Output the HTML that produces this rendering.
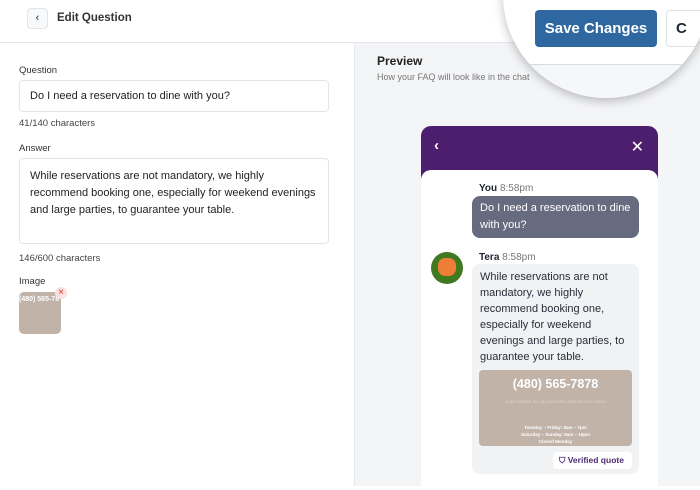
<!DOCTYPE html>
<html><head><style>
*{box-sizing:border-box;margin:0;padding:0}
body{width:700px;height:486px;overflow:hidden;font-family:"Liberation Sans",sans-serif;background:#fff;position:relative;color:#1f2430}
.hdr{position:absolute;left:0;top:0;width:700px;height:43px;border-bottom:1px solid #e6e7ea;background:#fff}
.back{position:absolute;left:27px;top:8px;width:21px;height:21px;border:1px solid #e3e4e8;border-radius:4px;background:#f8f9fa;font-size:11px;text-align:center;line-height:19px;color:#333}
.ttl{position:absolute;left:57px;top:12px;font-size:11.5px;color:#333;font-weight:600}
.left{position:absolute;left:0;top:43px;width:354px;height:443px;background:#fff}
.right{position:absolute;left:354px;top:43px;width:346px;height:443px;background:#f4f5f7;border-left:1px solid #e6e7ea}
.lbl{position:absolute;left:19px;font-size:9.5px;color:#333}
.box{position:absolute;left:19px;width:310px;border:1px solid #e3e4e8;border-radius:4px;background:#fff;font-size:11px;color:#222;padding:9px 10px;line-height:17px}
.cnt{position:absolute;left:19px;font-size:9.5px;color:#444}
.chat{position:absolute;left:421px;top:126px;width:237px;height:360px;background:#4d1d6e;border-radius:10px 10px 0 0}
.cbody{position:absolute;left:0;top:44px;width:237px;height:320px;background:#fff;border-radius:10px 10px 0 0}
</style></head><body>
<div class="hdr"><div class="back">‹</div><div class="ttl">Edit Question</div></div>
<div class="left">
<div class="lbl" style="top:22px">Question</div>
<div class="box" style="top:37px;height:32px;padding:7px 10px">Do I need a reservation to dine with you?</div>
<div class="cnt" style="top:75px">41/140 characters</div>
<div class="lbl" style="top:100px">Answer</div>
<div class="box" style="top:115px;height:86px">While reservations are not mandatory, we highly recommend booking one, especially for weekend evenings and large parties, to guarantee your table.</div>
<div class="cnt" style="top:210px">146/600 characters</div>
<div class="lbl" style="top:233px">Image</div>
<div style="position:absolute;left:19px;top:249px;width:42px;height:42px;background:#c1b3a8;border-radius:5px;overflow:hidden;color:#fff;font-size:7px;font-weight:bold;padding-top:4px;white-space:nowrap">(480) 565-78</div>
<div style="position:absolute;left:55px;top:244px;width:12px;height:12px;border-radius:50%;background:#fbe0e0;color:#d33;font-size:10px;line-height:12px;text-align:center">×</div>
</div>
<div class="right">
<div style="position:absolute;left:22px;top:11px;font-size:12px;font-weight:bold;color:#222">Preview</div>
<div style="position:absolute;left:22px;top:29px;font-size:9px;color:#777">How your FAQ will look like in the chat</div>
</div>
<div class="chat">
<div style="position:absolute;left:13px;top:11px;color:#fff;font-size:15px;font-weight:bold">‹</div>
<div style="position:absolute;right:14px;top:11px;color:#fff;font-size:16px">✕</div>
<div class="cbody">
<div style="position:absolute;left:58px;top:13px;font-size:10px"><b>You</b> <span style="color:#777">8:58pm</span></div>
<div style="position:absolute;left:51px;top:26px;width:167px;height:42px;background:#676b7f;border-radius:8px;color:#fff;font-size:11px;line-height:17px;padding:4px 8px">Do I need a reservation to dine with you?</div>
<div style="position:absolute;left:10px;top:82px;width:32px;height:32px;border-radius:50%;background:#3f7a20"><div style="position:absolute;left:7px;top:6px;width:18px;height:18px;background:#ee7e35;border-radius:40%"></div></div>
<div style="position:absolute;left:58px;top:82px;font-size:10px"><b>Tera</b> <span style="color:#777">8:58pm</span></div>
<div style="position:absolute;left:51px;top:94px;width:167px;height:210px;background:#f1f2f4;border-radius:8px;font-size:11px;line-height:16px;color:#2a2d3a;padding:5px 8px">While reservations are not mandatory, we highly recommend booking one, especially for weekend evenings and large parties, to guarantee your table.
<div style="position:absolute;left:7px;top:106px;width:153px;height:76px;background:#c1b3a8;border-radius:4px;color:#fff;text-align:center">
<div style="font-size:12.5px;font-weight:bold;margin-top:6px">(480) 565-7878</div>
<div style="font-size:4px;color:#e0d6ce;margin-top:2px">4140 PARKER RD. ALLENTOWN, NEW MEXICO 18674</div>
<div style="font-size:4.5px;line-height:7px;margin-top:14px;font-weight:bold">Tuesday – Friday: 8am – 7pm<br>Saturday – Sunday: 8am – 10pm<br>Closed Monday</div></div>
<div style="position:absolute;left:81px;top:188px;width:79px;height:17px;background:#fff;border-radius:4px;font-size:8.5px;color:#4d2a73;font-weight:bold;line-height:17px;padding-left:6px">⛉ Verified quote</div>
</div></div></div>
<div style="position:absolute;left:503px;top:-108px;width:206px;height:206px;border-radius:50%;background:#fff;box-shadow:0 3px 10px rgba(0,0,0,.25);overflow:hidden">
<div style="position:absolute;left:0;top:172px;width:206px;height:1px;background:#d8dadd"></div>
<div style="position:absolute;left:0;top:173px;width:206px;height:40px;background:#f6f7f8"></div>
<div style="position:absolute;left:32px;top:118px;width:122px;height:37px;background:#2f67a1;border-radius:4px;color:#fff;font-size:15px;font-weight:bold;text-align:center;line-height:37px">Save Changes</div>
<div style="position:absolute;left:163px;top:118px;width:60px;height:37px;border:1px solid #dfe1e4;border-radius:4px;font-size:15px;font-weight:bold;line-height:35px;padding-left:9px">C</div>
<div style="position:absolute;left:-4px;top:180px;font-size:9px;color:#777">n the chat</div>
</div>
</body></html>
